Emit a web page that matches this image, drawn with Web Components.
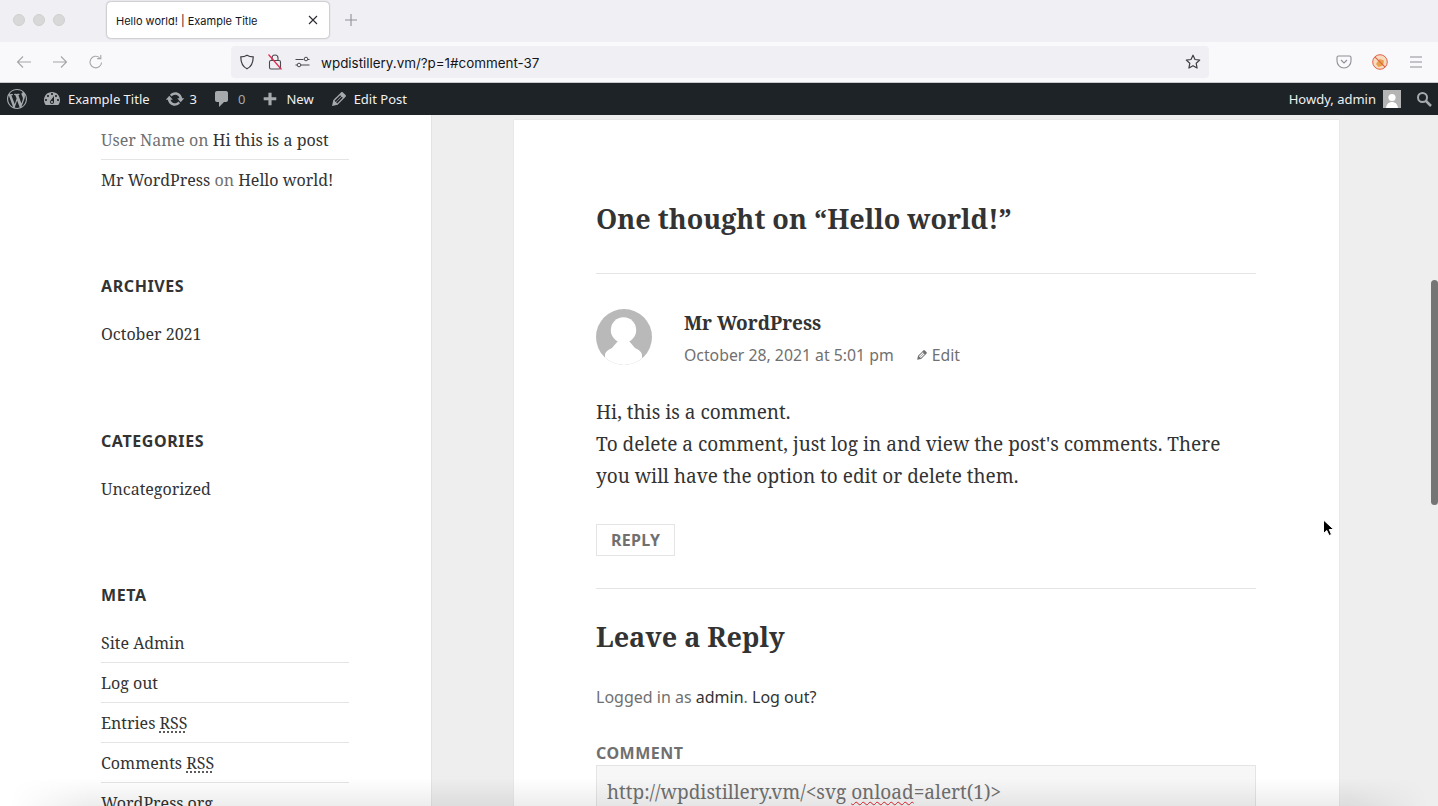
<!DOCTYPE html>
<html><head><meta charset="utf-8"><title>Hello world! | Example Title</title>
<style>
html,body{margin:0;padding:0;height:806px;overflow:hidden;background:#eee}
body{display:flex;flex-direction:column;position:relative;font-family:"Noto Sans","Open Sans",sans-serif}
</style></head><body>
<tab-bar></tab-bar>
<nav-bar></nav-bar>
<admin-bar></admin-bar>
<page-view>
  <side-bar slot="side">
    <side-list first>
      <side-item muted-a="User Name" link="Hi this is a post"></side-item>
      <side-item muted-a="Mr WordPress" link="Hello world!" last></side-item>
    </side-list>
    <side-list title="ARCHIVES"><side-item link="October 2021" last></side-item></side-list>
    <side-list title="CATEGORIES"><side-item link="Uncategorized" last></side-item></side-list>
    <side-list title="META">
      <side-item link="Site Admin"></side-item>
      <side-item link="Log out"></side-item>
      <side-item link="Entries" abbr="RSS"></side-item>
      <side-item link="Comments" abbr="RSS"></side-item>
      <side-item link="WordPress.org" last></side-item>
    </side-list>
  </side-bar>
  <comment-card slot="main"></comment-card>
</page-view>
<window-overlay></window-overlay>
<script>
const def=(name,html,init)=>customElements.define(name,class extends HTMLElement{
  constructor(){super();this.attachShadow({mode:'open'}).innerHTML=html}
  connectedCallback(){init&&init(this,this.shadowRoot)}
});
const dash=(d,s,c='#a7aaad')=>`<svg width="${s}" height="${s}" viewBox="0 0 20 20" fill="${c}"><path d="${d}"/></svg>`;
const I={
wp:"M20 10c0-5.51-4.49-10-10-10C4.48 0 0 4.49 0 10c0 5.52 4.48 10 10 10 5.51 0 10-4.48 10-10zM7.78 15.37L4.37 6.22c.55-.02 1.17-.08 1.17-.08.5-.06.44-1.13-.06-1.11 0 0-1.45.11-2.37.11-.18 0-.37 0-.58-.01C4.12 2.69 6.87 1.11 10 1.11c2.33 0 4.45.87 6.05 2.34-.68-.11-1.65.39-1.65 1.58 0 .74.45 1.36.9 2.1.35.61.55 1.36.55 2.46 0 1.49-1.4 5-1.4 5l-3.03-8.37c.54-.02.82-.17.82-.17.5-.05.44-1.25-.06-1.22 0 0-1.44.12-2.38.12-.87 0-2.33-.12-2.33-.12-.5-.03-.56 1.2-.06 1.22l.92.08 1.26 3.41zM17.41 10c.24-.64.74-1.87.43-4.25.7 1.29 1.05 2.71 1.05 4.25 0 3.29-1.73 6.24-4.4 7.78.97-2.59 1.94-5.2 2.92-7.78zM6.1 18.09C3.12 16.65 1.11 13.53 1.11 10c0-1.3.23-2.48.72-3.59C3.25 10.3 4.67 14.2 6.1 18.09zm4.03-6.63l2.58 6.98c-.86.29-1.76.45-2.71.45-.79 0-1.57-.11-2.29-.33.81-2.38 1.62-4.74 2.42-7.1z",
dash:"M3.76 16h12.48c1.1-1.37 1.76-3.11 1.76-5 0-4.42-3.58-8-8-8s-8 3.58-8 8c0 1.89.66 3.63 1.76 5zM10 4c.55 0 1 .45 1 1s-.45 1-1 1-1-.45-1-1 .45-1 1-1zM6 6c.55 0 1 .45 1 1s-.45 1-1 1-1-.45-1-1 .45-1 1-1zm8 0c.55 0 1 .45 1 1s-.45 1-1 1-1-.45-1-1 .45-1 1-1zm-5.37 5.55L12 7v6c0 1.1-.9 2-2 2s-2-.9-2-2c0-.57.24-1.08.63-1.45zM4 10c.55 0 1 .45 1 1s-.45 1-1 1-1-.45-1-1 .45-1 1-1zm12 0c.55 0 1 .45 1 1s-.45 1-1 1-1-.45-1-1 .45-1 1-1zm-5 3c0-.55-.45-1-1-1s-1 .45-1 1 .45 1 1 1 1-.45 1-1z",
upd:"M10.2 3.28c3.53 0 6.43 2.61 6.92 6h2.08l-3.5 4-3.5-4h2.32c-.45-1.97-2.21-3.45-4.32-3.45-1.45 0-2.73.71-3.54 1.78L4.95 5.66C6.23 4.2 8.11 3.28 10.2 3.28zm-.4 13.44c-3.52 0-6.43-2.61-6.92-6H.8l3.5-4c1.17 1.33 2.33 2.67 3.5 4H5.48c.45 1.97 2.21 3.45 4.32 3.45 1.45 0 2.73-.71 3.54-1.78l1.71 1.95c-1.28 1.46-3.15 2.38-5.25 2.38z",
cmt:"M5 2h9c1.1 0 2 .9 2 2v7c0 1.1-.9 2-2 2h-2l-5 5v-5H5c-1.1 0-2-.9-2-2V4c0-1.1.9-2 2-2z",
plus:"M17 8v3.5h-5.25V17h-3.5v-5.5H3V8h5.25V3h3.5v5z",
edit:"M13.89 3.39l2.71 2.72c.46.46.42 1.24.03 1.64l-8.01 8.02-5.56 1.16 1.16-5.58s7.6-7.63 7.99-8.03c.39-.39 1.22-.39 1.68.07zm-2.73 2.79l-5.59 5.61 1.11 1.11 5.54-5.65zm-2.97 8.23l5.58-5.6-1.07-1.08-5.59 5.6z"
};

def('tab-bar',`<style>
:host{display:flex;align-items:flex-start;height:42px;background:#f0f0f4;box-sizing:border-box;flex:none}
.dots{display:flex;gap:8px;padding:14px 0 0 13px;width:107px;box-sizing:border-box}
.dots i{width:12px;height:12px;border-radius:50%;background:#d8d8d9;border:.5px solid #cfcfd0;box-sizing:border-box}
.tab{margin-top:2px;width:222px;height:36px;box-sizing:border-box;background:#fff;border-radius:4px;box-shadow:0 0 2px rgba(0,0,0,.5);display:flex;align-items:center;padding:0 11px 0 9px;font:11px/14px Inter,"Liberation Sans",sans-serif;color:#15141a;justify-content:space-between}
.tab span{padding-top:1px}
.new{margin:14px 0 0 16px;display:block}
</style><div class="dots"><i></i><i></i><i></i></div>
<div class="tab"><span>Hello world! | Example Title</span><svg width="10" height="10" viewBox="0 0 10 10" stroke="#2b2a33" stroke-width="1.1" fill="none"><path d="M1 1l8 8M9 1l-8 8"/></svg></div>
<svg class="new" width="12" height="12" viewBox="0 0 12 12" stroke="#8f8f96" stroke-width="1.1" fill="none"><path d="M6 0v12M0 6h12"/></svg>`);

def('nav-bar',`<style>
:host{display:flex;align-items:center;height:40px;background:#f9f9fb;border-bottom:1px solid #c9c9cc;box-sizing:content-box;flex:none;position:relative}
.nav{display:flex;gap:20px;width:231px;padding-left:16px;box-sizing:border-box;align-items:center}
.url{width:978px;height:32px;background:#f0f0f4;border-radius:4px;display:flex;align-items:center;padding:0 8px;box-sizing:border-box;font:13.4px/16px Inter,"Liberation Sans",sans-serif;color:#15141a;flex:none}
.url span{flex:1;margin-left:11px;padding-top:1px}
.right{display:flex;align-items:center;gap:20px;margin-left:127px}
svg{display:block;flex:none}
.gap{margin-left:12px}
</style>
<div class="nav">
<svg width="16" height="16" viewBox="0 0 16 16" fill="none" stroke="#a5a5aa" stroke-width="1.1"><path d="M15 8H1.5M7 2.5L1.5 8 7 13.5"/></svg>
<svg width="16" height="16" viewBox="0 0 16 16" fill="none" stroke="#a5a5aa" stroke-width="1.1"><path d="M1 8h13.5M9 2.5L14.5 8 9 13.5"/></svg>
<svg width="16" height="16" viewBox="0 0 16 16" fill="none" stroke="#a5a5aa" stroke-width="1.1"><path d="M13.6 8.5A5.8 5.8 0 1 1 11.6 3.6M12.8 1v3.6H9.2" /></svg>
</div>
<div class="url">
<svg width="16" height="16" viewBox="0 0 16 16" fill="none" stroke="#3d3d42" stroke-width="1.2"><path d="M8 1.2c2 1.2 4 1.6 6.2 1.7 0 5.6-1.8 9.600-6.2 11.900C3.600 12.500 1.800 8.500 1.800 2.900 4 2.800 6 2.400 8 1.200z"/></svg>
<svg class="gap" width="16" height="18" viewBox="0 0 16 18" fill="none" stroke="#4a4a4f" stroke-width="1.1"><rect x="2.500" y="7.500" width="11" height="8.500" rx="1.500"/><path d="M5 7.500V5a3 3 0 0 1 6 0v2.500"/><path d="M1.500 1.500L14.500 16.500" stroke="#e22850" stroke-width="1.2"/></svg>
<svg class="gap" width="15" height="12" viewBox="0 0 15 12" fill="none" stroke="#4a4a4f" stroke-width="1"><path d="M.5 3.500h8M13 3.500h1.500M.5 9h1.500M6 9h8.500"/><circle cx="11" cy="3" r="1.800"/><circle cx="4" cy="9" r="1.800"/></svg>
<span>wpdistillery.vm/?p=1#comment-37</span>
<svg width="16" height="16" viewBox="0 0 16 16" fill="none" stroke="#3d3d42" stroke-width="1.2" stroke-linejoin="round"><path d="M8 1.200l2 4.300 4.700.6-3.500 3.200.9 4.700L8 11.700 3.900 14l.9-4.700L1.300 6.100 6 5.500z"/></svg>
</div>
<div class="right">
<svg width="16" height="16" viewBox="0 0 16 16" fill="none" stroke="#8f8f96" stroke-width="1.1"><path d="M2.500 2h11A1.500 1.500 0 0 1 15 3.500V7a7 7 0 0 1-14 0V3.500A1.500 1.500 0 0 1 2.500 2z"/><path d="M5 6l3 3 3-3"/></svg>
<svg width="16" height="16" viewBox="0 0 16 16"><circle cx="8" cy="8" r="7.300" fill="#f7dcc0" stroke="#e0604a" stroke-width="1"/><path d="M4 10l3.500-5 4.500 1.500-1 5-4.500 1.500z" fill="#e8a04a"/><path d="M2.800 2.800L13.200 13.200" stroke="#e0604a" stroke-width="1.100"/></svg>
<svg width="16" height="16" viewBox="0 0 16 16" fill="none" stroke="#8f8f96" stroke-width="1.100"><path d="M2 3h12M2 8h12M2 13h12"/></svg>
</div>`);

const barItem=(icon,size,text,gap,extra='')=>`<span class="it" style="${extra}">${dash(icon,size)}<span style="margin-left:${gap}px">${text}</span></span>`;
def('admin-bar',`<style>
:host{display:flex;align-items:center;height:32px;background:#1d2327;color:#f0f0f1;font:13px/32px "Noto Sans","Open Sans",sans-serif;flex:none;padding-left:7px;padding-right:6px;box-sizing:border-box}
.it{display:flex;align-items:center;white-space:nowrap}
svg{display:block;flex:none}
.dim{color:#a7aaad}
.sp{flex:1}
.av{width:18px;height:18px;background:#b4b4b4;margin-left:7px;overflow:hidden}
</style>
<span class="it">${dash(I.wp,20)}</span>
${barItem(I.dash,20,'Example Title',6,'margin-left:15px')}
${barItem(I.upd,20,'3',5,'margin-left:15px')}
${barItem(I.cmt,20,'<span class="dim">0</span>',6,'margin-left:15px')}
${barItem(I.plus,18,'New',7,'margin-left:16px')}
${barItem(I.edit,20,'Edit Post',5,'margin-left:15px')}
<span class="sp"></span>
<span class="it">Howdy, admin<svg class="av" viewBox="0 0 18 18"><rect width="18" height="18" fill="#b4b4b4"/><circle cx="9" cy="7.500" r="3.600" fill="#fff"/><path d="M3 18c.5-4 3-6 6-6s5.500 2 6 6z" fill="#fff"/></svg></span>
<svg style="margin-left:15px" width="16" height="16" viewBox="0 0 16 16" fill="none" stroke="#a7aaad" stroke-width="2"><circle cx="6.500" cy="6.500" r="4.500"/><path d="M10 10l5 5" stroke-width="2.500"/></svg>`);

def('page-view',`<style>
:host{display:flex;flex:1;min-height:0;overflow:hidden;background:#eee;align-items:flex-start}
::slotted([slot=side]){flex:none}
</style><slot name="side"></slot><slot name="main"></slot>`);

def('side-bar',`<style>
:host{display:block;width:432px;height:691px;box-sizing:border-box;background:#fff;border-right:1px solid #e4e4e4;padding:5px 0 0 101px;font:16px/24px "Noto Serif","DejaVu Serif",serif;color:#333}
</style><slot></slot>`);

def('side-list',`<style>
:host{display:block;width:248px;margin-bottom:74.5px}
:host([first]){margin-bottom:74.4px}
h2{margin:0 0 16px;font:700 16px/24px "Noto Sans","Open Sans",sans-serif;color:#333;letter-spacing:.6px}
h2:empty{display:none}
</style><h2></h2><slot></slot>`,(el,r)=>{r.querySelector('h2').textContent=el.getAttribute('title')||'';el.removeAttribute('title')});

def('side-item',`<style>
:host{display:block;height:40px;box-sizing:border-box;padding-top:8px;border-bottom:1px solid #e4e4e4;white-space:nowrap;color:#707070}
:host([last]){border-bottom-color:transparent}
a{color:#333;text-decoration:none}
#m a{color:#707070}
#m.plain a{color:#333}
abbr{text-decoration:underline dotted;text-underline-offset:2px;color:#333}
</style><span id="m"></span><a id="l"></a>`,(el,r)=>{
  const m=el.getAttribute('muted-a');
  if(m){const s=r.getElementById('m');s.innerHTML=`<a>${m}</a> on `;if(m==='Mr WordPress')s.className='plain'}
  r.getElementById('l').textContent=el.getAttribute('link');
  const a=el.getAttribute('abbr');
  if(a){r.getElementById('l').insertAdjacentHTML('afterend',` <abbr>${a}</abbr>`)}
});

def('comment-card',`<style>
:host{display:block;margin:5px 0 0 82px;width:825px;box-sizing:border-box;background:#fff;padding:81px 83px 0 82px;height:700px;box-shadow:0 0 1px rgba(0,0,0,.15);font:19px/32px "Noto Serif","DejaVu Serif",serif;color:#333}
h2{margin:0;font:700 27px/36px "Noto Serif","DejaVu Serif",serif;color:#333}
.list-head{padding-bottom:36px;border-bottom:1px solid #e4e4e4}
.cm{display:flex;padding-top:35px}
.av{width:56px;height:56px;flex:none;border-radius:50%;background:#b9b9b9;overflow:hidden}
.meta{margin-left:32px}
.author{font:700 19px/28px "Noto Serif","DejaVu Serif",serif;margin-bottom:4px}
.date{font:15.8px/28px "Noto Sans","Open Sans",sans-serif;color:#707070;display:flex;align-items:center}
.edit{display:flex;align-items:center;margin-left:21px}
.edit svg{margin-right:3px}
.body{margin:0;padding-top:27px}
.reply{display:inline-block;margin-top:32px;height:32px;box-sizing:border-box;border:1px solid #e4e4e4;padding:0 14px;font:700 16px/30px "Noto Sans","Open Sans",sans-serif;color:#707070;letter-spacing:.3px;vertical-align:top}
.reply-row{padding-bottom:32px;border-bottom:1px solid #e4e4e4;display:flow-root}
.rp{padding-top:30px}
.logged{margin-top:28px;font:16px/28px "Noto Sans","Open Sans",sans-serif;color:#707070}
.logged a{color:#333}
.lab{margin-top:30px;font:700 16px/24px "Noto Sans","Open Sans",sans-serif;color:#707070;letter-spacing:.5px}
.ta{height:70px;box-sizing:border-box;background:#f7f7f7;border:1px solid #e4e4e4;padding:10px 10px;font:19.05px/32px "Noto Serif","DejaVu Serif",serif;color:#707070;white-space:nowrap}
.ta u{text-decoration:underline wavy #e0202a 1px;text-underline-offset:2px}
</style>
<div class="list-head"><h2>One thought on “Hello world!”</h2></div>
<div class="cm"><div class="av"><svg width="56" height="56" viewBox="0 0 56 56"><circle cx="27.500" cy="21" r="12.700" fill="#fff"/><path d="M9 56V46C9 43 12 41 16 39L22 32H33L39 39C43 41 46 43 46 46V56Z" fill="#fff"/></svg></div>
<div class="meta"><div class="author">Mr WordPress</div>
<div class="date">October 28, 2021 at 5:01 pm<span class="edit"><svg width="14" height="14" viewBox="0 0 20 20" fill="#707070"><path d="${I.edit}"/></svg>Edit</span></div></div></div>
<p class="body">Hi, this is a comment.<br>To delete a comment, just log in and view the post's comments. There you will have the option to edit or delete them.</p>
<div class="reply-row"><span class="reply">REPLY</span></div>
<div class="rp"><h2>Leave a Reply</h2></div>
<div class="logged">Logged in as <a>admin</a>. <a>Log out?</a></div>
<div class="lab">COMMENT</div>
<div class="ta">http://wpdistillery.vm/&lt;svg <u>onload</u>=alert(1)&gt;</div>`);

def('window-overlay',`<style>
:host{display:block;position:absolute;inset:0;pointer-events:none}
.thumb{position:absolute;left:1431px;top:280px;width:7px;height:225px;border-radius:4px;background:#757575}
.fade{position:absolute;left:0;right:0;bottom:0;height:28px;background:linear-gradient(to bottom,rgba(0,0,0,0),rgba(0,0,0,.07));-webkit-mask-image:linear-gradient(to right,transparent 10px,#000 90px,#000 1348px,transparent 1428px)}
svg{position:absolute;left:1322px;top:519px}
</style><div class="thumb"></div><div class="fade"></div>
<svg width="13" height="19" viewBox="0 0 13 19"><path d="M1.500 1v13.500l3.300-3 2.200 5 2.500-1-2.200-5h4.500z" fill="#000" stroke="#fff" stroke-width="1"/></svg>`);
</script>
</body></html>
